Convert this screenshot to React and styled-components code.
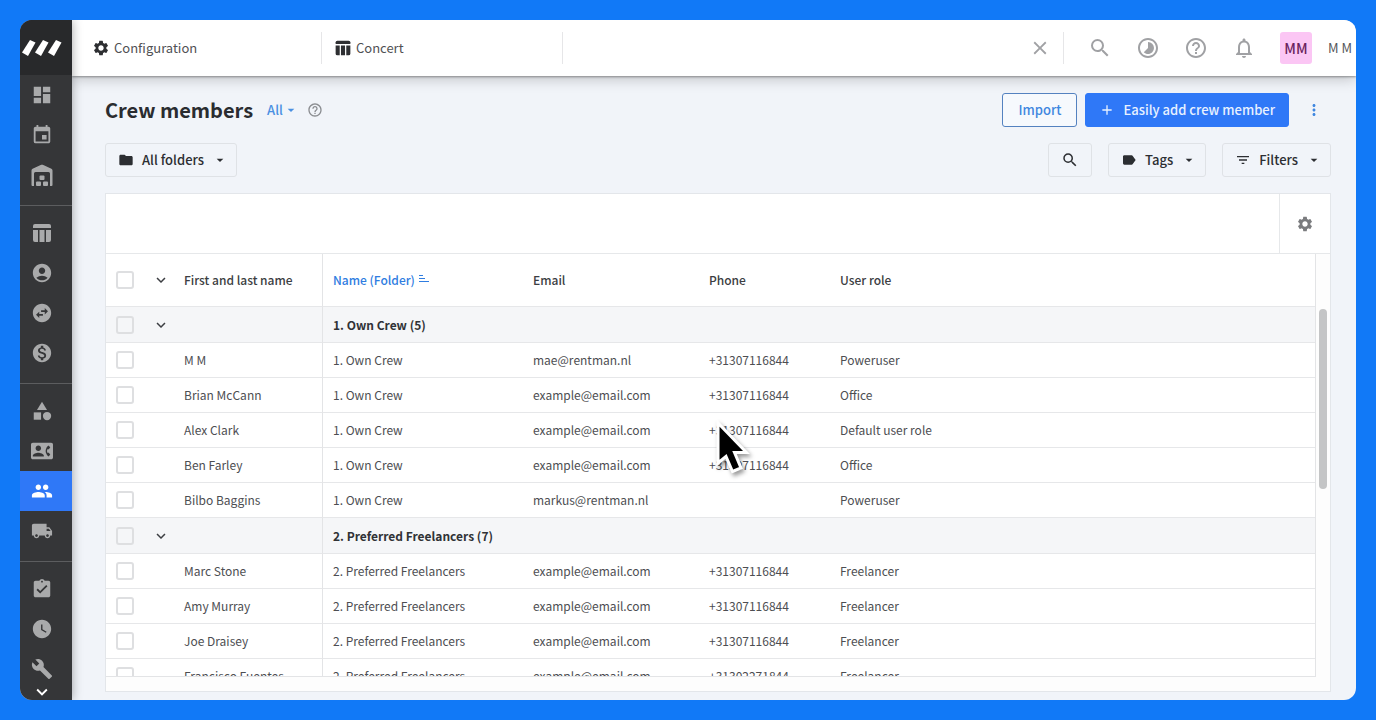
import React from "react";
import styled, { createGlobalStyle } from "styled-components";
import {
  MdDashboard, MdEvent, MdAccountCircle, MdSwapHorizontalCircle,
  MdMonetizationOn, MdCategory, MdContactPhone, MdPeople, MdLocalShipping,
  MdAssignmentTurnedIn, MdWatchLater, MdBuild, MdKeyboardArrowDown, MdSettings,
  MdClose, MdSearch, MdHelpOutline, MdNotificationsNone, MdMoreVert, MdAdd,
  MdFolder, MdLabel, MdFilterList, MdArrowDropDown, MdTimelapse,
} from "react-icons/md";

const Global = createGlobalStyle`
  * { box-sizing: border-box; }
  body {
    margin: 0;
    background: #1179f7;
    color: #3a3b3e;
    font-family: "Source Sans Pro", "Noto Sans CJK SC", "Noto Sans", sans-serif;
    font-size: 12px;
    line-height: 20px;
  }
  button { font: inherit; color: inherit; cursor: pointer; }
  svg { display: block; flex-shrink: 0; }
`;

const Desktop = styled.div`
  height: 100vh;
  padding: 20px;
`;

const Window = styled.div`
  display: flex;
  height: 100%;
  border-radius: 12px;
  overflow: hidden;
  background: #f1f4f9;
`;

const Sidebar = styled.nav`
  z-index: 2;
  display: flex;
  flex-direction: column;
  flex: 0 0 52px;
  background: #353638;
  color: #a9aaab;
  box-shadow: 0 0 10px rgba(0, 0, 0, 0.35);
`;

const Logo = styled.a`
  display: flex;
  flex: 0 0 55px;
  align-items: center;
  padding-left: 2px;
  background: #28292b;
`;

const NavGroup = styled.div`
  display: flex;
  flex-direction: column;
  flex-shrink: 0;
  padding-bottom: 10px;
  & + & { padding-top: 7px; border-top: 1px solid #5c5d5f; }
  &:last-of-type { padding-bottom: 0; }
`;

const NavItem = styled.a`
  display: grid;
  place-items: center;
  height: 40px;
  padding-right: 8px;
  color: ${(p) => (p.$active ? "#fff" : "inherit")};
  background: ${(p) => (p.$active ? "#2f78f7" : "transparent")};
`;

const MoreNav = styled.button`
  display: grid;
  place-items: center;
  height: 20px;
  margin-top: -8px;
  padding: 0 8px 0 0;
  border: 0;
  background: none;
  color: #fff;
`;

const Main = styled.div`
  display: flex;
  flex-direction: column;
  flex: 1;
  min-width: 0;
`;

const TopBar = styled.header`
  z-index: 1;
  display: flex;
  flex: 0 0 56px;
  align-items: center;
  background: #fff;
  box-shadow: 0 1px 2px rgba(0, 0, 0, 0.35), 0 2px 14px rgba(0, 0, 0, 0.24);
`;

const Tab = styled.button`
  display: flex;
  align-items: center;
  gap: 4px;
  width: ${(p) => p.$width}px;
  height: 32px;
  padding: 0 0 0 ${(p) => p.$inset}px;
  border: 0;
  border-right: 1px solid #e6e6e8;
  background: none;
  color: #505154;
  font-size: 13px;
  svg { color: #2e2f32; }
`;

const TopActions = styled.div`
  display: flex;
  align-items: center;
  gap: 24px;
  margin-left: auto;
  padding-right: 4px;
`;

const CloseGroup = styled.div`
  display: flex;
  align-items: center;
  gap: 12px;
`;

const IconButton = styled.button`
  display: grid;
  place-items: center;
  min-width: ${(p) => p.$width || 0}px;
  padding: 0;
  border: 0;
  background: none;
  color: ${(p) => p.$tone || "#a0a1a4"};
`;

const Rule = styled.span`
  width: 1px;
  height: 32px;
  background: #e6e6e8;
`;

const User = styled.button`
  display: flex;
  align-items: center;
  gap: 16px;
  padding: 0;
  border: 0;
  background: none;
  color: #55565a;
  font-size: 13px;
`;

const Avatar = styled.span`
  display: grid;
  place-items: center;
  width: 32px;
  height: 32px;
  border-radius: 3px;
  background: #fbc6f4;
  color: #6a1f5e;
  font-size: 14px;
  font-weight: 500;
`;

const Page = styled.main`
  display: flex;
  flex-direction: column;
  flex: 1;
  min-height: 0;
  padding: 16px 25px 8px 33px;
`;

const TitleRow = styled.div`
  display: flex;
  align-items: center;
  gap: 8px;
  height: 35px;
`;

const Title = styled.h1`
  margin: 0 6px 0 0;
  color: #2a2c30;
  font-size: 20px;
  font-weight: 700;
  line-height: 28px;
`;

const Scope = styled.button`
  display: flex;
  align-items: center;
  padding: 0;
  border: 0;
  background: none;
  color: #4a90e2;
  font-size: 13px;
  font-weight: 500;
`;

const Spacer = styled.span`
  flex: 1;
`;

const Action = styled.button`
  display: flex;
  align-items: center;
  justify-content: center;
  gap: 8px;
  height: 34px;
  padding: 0 ${(p) => (p.$primary ? 13 : 15)}px;
  border: 1px solid ${(p) => (p.$primary ? "#2f78f7" : "#5482c0")};
  border-radius: 3px;
  background: ${(p) => (p.$primary ? "#2f78f7" : "#f6f9fd")};
  color: ${(p) => (p.$primary ? "#e8f1ff" : "#3f87e0")};
  font-size: 13px;
  font-weight: 500;
`;

const FilterRow = styled.div`
  display: flex;
  align-items: center;
  gap: 16px;
  margin-top: 16px;
`;

const FilterButton = styled.button`
  display: flex;
  align-items: center;
  gap: 8px;
  height: 34px;
  padding: 0 ${(p) => (p.$square ? 12 : 8)}px 0 12px;
  border: 1px solid #dfe2e6;
  border-radius: 3px;
  background: transparent;
  color: #2c2e32;
  font-size: 13px;
  font-weight: 500;
`;

const Panel = styled.section`
  display: flex;
  flex-direction: column;
  flex: 1;
  min-height: 0;
  margin-top: 16px;
  padding-bottom: 14px;
  border: 1px solid #e3e6ea;
  background: #fdfdfd;
`;

const PanelBar = styled.div`
  display: flex;
  justify-content: flex-end;
  flex: 0 0 60px;
  border-bottom: 1px solid #e6e8ea;
  background: #fff;
`;

const PanelSettings = styled.div`
  display: grid;
  place-items: center;
  width: 51px;
  border-left: 1px solid #e6e8ea;
`;

const Grid = styled.table`
  width: 100%;
  border-collapse: separate;
  border-spacing: 0;
  table-layout: fixed;
  background: #fff;
`;

const Cell = styled.td`
  height: 35px;
  padding: 0 0 0 10px;
  border-bottom: 1px solid #e6e7e9;
  border-left: ${(p) => (p.$ruled ? "1px solid #e3e4e6" : "0")};
  color: #4d4e52;
  white-space: nowrap;
  vertical-align: middle;
`;

const GroupCell = styled(Cell)`
  height: 36px;
  background: #f5f6f8;
  color: #303236;
  font-weight: 700;
`;

const HeadCell = styled(Cell).attrs({ as: "th" })`
  height: 53px;
  color: #3c3e42;
  font-weight: 500;
  text-align: left;
`;

const SortButton = styled.button`
  display: flex;
  align-items: center;
  gap: 4px;
  padding: 0;
  border: 0;
  background: none;
  color: #2f7de1;
`;

const Check = styled.input.attrs({ type: "checkbox" })`
  display: block;
  appearance: none;
  width: 18px;
  height: 18px;
  margin: 0;
  border: 2px solid #dedfe1;
  border-radius: 3px;
  background: transparent;
`;

const Scroller = styled.div`
  display: flex;
  flex: 1;
  min-height: 0;
`;

const Viewport = styled.div`
  flex: 1;
  min-width: 0;
  overflow: hidden;
  border-right: 1px solid #e3e4e6;
  border-bottom: 1px solid #e3e4e6;
`;

const Track = styled.div`
  flex: 0 0 14px;
  padding: 55px 3px 0;
`;

const Thumb = styled.div`
  height: 180px;
  border-radius: 4px;
  background: #c4c5c6;
`;

const Pointer = styled.svg`
  position: absolute;
  z-index: 5;
  left: 712px;
  top: 418px;
  pointer-events: none;
  filter: drop-shadow(2px 3px 2px rgba(0, 0, 0, 0.4));
`;

const WarehouseIcon = () => (
  <svg width="22" height="22" viewBox="0 0 22 22" fill="currentColor">
    <path d="M0.500 21V6.500Q0.500 5.300 1.600 4.800L10.200 0.800Q11 0.500 11.800 0.800L20.400 4.800Q21.500 5.300 21.500 6.500V21Q21.500 22 20.500 22H19V9.500Q19 8 17.500 8H4.500Q3 8 3 9.500V22H1.500Q0.500 22 0.500 21Z" />
    <rect x="8.500" y="11.500" width="5" height="4.500" rx="1" />
    <rect x="5" y="17.500" width="5" height="4.500" rx="1" />
    <rect x="12" y="17.500" width="5" height="4.500" rx="1" />
  </svg>
);

const BoardIcon = ({ size }) => (
  <svg width={size} height={size} viewBox="0 0 22 22" fill="currentColor">
    <path d="M2 6V4Q2 2 4 2H18Q20 2 20 4V6Z" />
    <path d="M2 8H7V20H4Q2 20 2 18ZM8.500 8H13.500V20H8.500ZM15 8H20V18Q20 20 18 20H15Z" />
  </svg>
);

const SortIcon = () => (
  <svg width="10" height="12" viewBox="0 0 10 12" stroke="currentColor">
    <path d="M0 1.500H4M0 4.500H6M0 7.500H10" />
  </svg>
);

const navGroups = [
  [["Dashboard", MdDashboard], ["Calendar", MdEvent], ["Warehouse", WarehouseIcon]],
  [["Projects", BoardIcon], ["Account", MdAccountCircle], ["Subrental", MdSwapHorizontalCircle], ["Invoices", MdMonetizationOn]],
  [["Equipment", MdCategory], ["Contacts", MdContactPhone], ["Crew members", MdPeople], ["Vehicles", MdLocalShipping]],
  [["Tasks", MdAssignmentTurnedIn], ["Time", MdWatchLater], ["Maintenance", MdBuild]],
];

const groups = [
  {
    label: "1. Own Crew", count: 5,
    rows: [
      ["M M", "mae@rentman.nl", "+31307116844", "Poweruser"],
      ["Brian McCann", "example@email.com", "+31307116844", "Office"],
      ["Alex Clark", "example@email.com", "+31307116844", "Default user role"],
      ["Ben Farley", "example@email.com", "+31307116844", "Office"],
      ["Bilbo Baggins", "markus@rentman.nl", "", "Poweruser"],
    ],
  },
  {
    label: "2. Preferred Freelancers", count: 7,
    rows: [
      ["Marc Stone", "example@email.com", "+31307116844", "Freelancer"],
      ["Amy Murray", "example@email.com", "+31307116844", "Freelancer"],
      ["Joe Draisey", "example@email.com", "+31307116844", "Freelancer"],
      ["Francisco Fuentes", "example@email.com", "+31302271844", "Freelancer"],
    ],
  },
];

const Columns = () => (
  <colgroup>
    <col style={{ width: 36 }} />
    <col style={{ width: 32 }} />
    <col style={{ width: 148 }} />
    <col style={{ width: 201 }} />
    <col style={{ width: 176 }} />
    <col style={{ width: 131 }} />
    <col />
  </colgroup>
);

const Expander = ({ label }) => (
  <IconButton aria-label={label} $tone="#3c3e42"><MdKeyboardArrowDown size={18} /></IconButton>
);

export default function App() {
  return (
    <Desktop>
      <Global />
      <Window>
        <Sidebar aria-label="Modules">
          <Logo href="#home" aria-label="Home">
            <svg width="40" height="16" viewBox="0 0 40 16" fill="#fff">
              {[0, 13, 26].map((x) => (
                <path key={x} transform={`translate(${x} 0)`} d="M8 0L13.500 2.500L6 16L0 12.500Z" />
              ))}
            </svg>
          </Logo>
          {navGroups.map((items, i) => (
            <NavGroup key={i}>
              {items.map(([label, Icon]) => (
                <NavItem key={label} href="#" aria-label={label} $active={label === "Crew members"}>
                  <Icon size={22} />
                </NavItem>
              ))}
            </NavGroup>
          ))}
          <MoreNav aria-label="More modules"><MdKeyboardArrowDown size={22} /></MoreNav>
        </Sidebar>
        <Main>
          <TopBar>
            <Tab $width={250} $inset={20}><MdSettings size={18} />Configuration</Tab>
            <Tab $width={241} $inset={12}><BoardIcon size={18} />Concert</Tab>
            <TopActions>
              <CloseGroup>
                <IconButton aria-label="Close"><MdClose size={22} /></IconButton>
                <Rule />
              </CloseGroup>
              <IconButton aria-label="Search"><MdSearch size={24} /></IconButton>
              <IconButton aria-label="Timer"><MdTimelapse size={24} /></IconButton>
              <IconButton aria-label="Help"><MdHelpOutline size={24} /></IconButton>
              <IconButton aria-label="Notifications"><MdNotificationsNone size={24} /></IconButton>
              <User><Avatar>MM</Avatar>M M</User>
            </TopActions>
          </TopBar>
          <Page>
            <TitleRow>
              <Title>Crew members</Title>
              <Scope>All<MdArrowDropDown size={16} /></Scope>
              <IconButton aria-label="About crew members" $tone="#8b8d91"><MdHelpOutline size={16} /></IconButton>
              <Spacer />
              <Action>Import</Action>
              <Action $primary><MdAdd size={16} />Easily add crew member</Action>
              <IconButton aria-label="More actions" $tone="#3f87e0" $width={34}><MdMoreVert size={18} /></IconButton>
            </TitleRow>
            <FilterRow>
              <FilterButton><MdFolder size={16} />All folders<MdArrowDropDown size={16} /></FilterButton>
              <Spacer />
              <FilterButton $square aria-label="Search crew"><MdSearch size={18} /></FilterButton>
              <FilterButton><MdLabel size={16} />Tags<MdArrowDropDown size={16} /></FilterButton>
              <FilterButton><MdFilterList size={16} />Filters<MdArrowDropDown size={16} /></FilterButton>
            </FilterRow>
            <Panel>
              <PanelBar>
                <PanelSettings>
                  <IconButton aria-label="Table settings" $tone="#7b7c7f"><MdSettings size={18} /></IconButton>
                </PanelSettings>
              </PanelBar>
              <Scroller>
                <Viewport>
                  <Grid>
                    <Columns />
                    <thead>
                      <tr>
                        <HeadCell><Check aria-label="Select all" /></HeadCell>
                        <HeadCell><Expander label="Collapse all" /></HeadCell>
                        <HeadCell>First and last name</HeadCell>
                        <HeadCell $ruled><SortButton>Name (Folder)<SortIcon /></SortButton></HeadCell>
                        <HeadCell>Email</HeadCell>
                        <HeadCell>Phone</HeadCell>
                        <HeadCell>User role</HeadCell>
                      </tr>
                    </thead>
                    {groups.map((g) => (
                      <tbody key={g.label}>
                        <tr>
                          <GroupCell><Check aria-label={`Select ${g.label}`} /></GroupCell>
                          <GroupCell><Expander label={`Collapse ${g.label}`} /></GroupCell>
                          <GroupCell />
                          <GroupCell $ruled colSpan={4}>{g.label} ({g.count})</GroupCell>
                        </tr>
                        {g.rows.map(([name, email, phone, role]) => (
                          <tr key={name}>
                            <Cell><Check aria-label={`Select ${name}`} /></Cell>
                            <Cell />
                            <Cell>{name}</Cell>
                            <Cell $ruled>{g.label}</Cell>
                            <Cell>{email}</Cell>
                            <Cell>{phone}</Cell>
                            <Cell>{role}</Cell>
                          </tr>
                        ))}
                      </tbody>
                    ))}
                  </Grid>
                </Viewport>
                <Track><Thumb /></Track>
              </Scroller>
            </Panel>
          </Page>
        </Main>
      </Window>
      <Pointer width="38" height="60" viewBox="0 0 38 60">
        <path d="M6 5V45L14 38.500L20.500 53.500L29 50L22.500 34.500H34.500Z" fill="#000" stroke="#fff" strokeWidth="3" />
      </Pointer>
    </Desktop>
  );
}
